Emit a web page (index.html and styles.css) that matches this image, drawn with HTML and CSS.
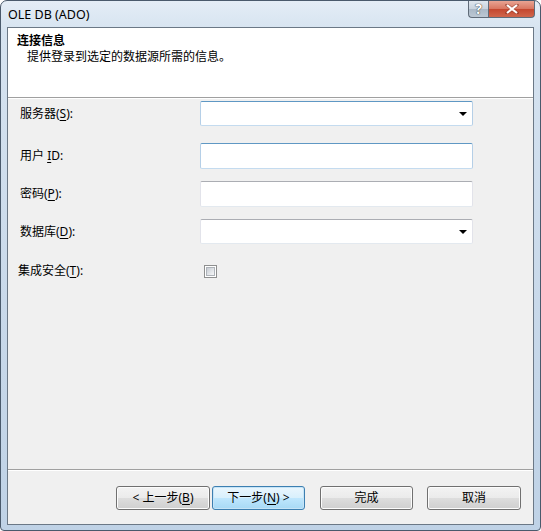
FILE: index.html
```html
<!DOCTYPE html>
<html lang="zh-CN">
<head>
<meta charset="utf-8">
<title>OLE DB (ADO)</title>
<link rel="stylesheet" href="styles.css">
</head>
<body>
<div class="window">
  <div class="titlebar">
    <span class="title">OLE DB (ADO)</span>
    <div class="caption-buttons">
      <div class="cap-btn help"><span>?</span></div>
      <div class="cap-btn close">
        <svg width="14" height="10" viewBox="0 0 14 10"><path d="M2 1 L12 9 M12 1 L2 9" stroke="#7a2a1a" stroke-width="3.4" stroke-linecap="square" opacity="0.5"/><path d="M2 1 L12 9 M12 1 L2 9" stroke="#fff" stroke-width="2.2"/></svg>
      </div>
    </div>
  </div>
  <div class="client">
    <div class="header">
      <div class="header-title">连接信息</div>
      <div class="header-sub">提供登录到选定的数据源所需的信息。</div>
    </div>
    <div class="body">
      <div class="row row-server">
        <label class="lbl">服务器(<u>S</u>):</label>
        <div class="combo focus-blue"><span class="arrow"></span></div>
      </div>
      <div class="row row-user">
        <label class="lbl">用户 <u>I</u>D:</label>
        <div class="textbox focus-blue"></div>
      </div>
      <div class="row row-pwd">
        <label class="lbl">密码(<u>P</u>):</label>
        <div class="textbox"></div>
      </div>
      <div class="row row-db">
        <label class="lbl">数据库(<u>D</u>):</label>
        <div class="combo"><span class="arrow"></span></div>
      </div>
      <div class="row row-check">
        <label class="lbl lbl-check">集成安全(<u>T</u>):</label>
        <div class="checkbox"><div class="check-inner"></div></div>
      </div>
    </div>
    <div class="footer">
      <div class="btn">&lt; 上一步(<u>B</u>)</div>
      <div class="btn btn-default">下一步(<u>N</u>) &gt;</div>
      <div class="btn btn-finish">完成</div>
      <div class="btn btn-cancel">取消</div>
    </div>
  </div>
</div>
</body>
</html>
```

FILE: styles.css
```css
* { box-sizing: border-box; }
html, body {
  margin: 0;
  padding: 0;
  background: #fff;
}
body {
  font-family: "Noto Sans", "Noto Sans CJK SC", sans-serif;
  font-size: 12px;
  color: #000;
}
.window {
  width: 541px;
  height: 531px;
  border: 1px solid #4a5a6c;
  border-radius: 7px 7px 4px 4px;
  background: linear-gradient(180deg, #e4edf6 0px, #d6e3f0 30px, #c9d9ea 300px, #bfd2e6 531px);
  display: flex;
  flex-direction: column;
  padding: 0 6px 5px 6px;
}
.titlebar {
  height: 26px;
  display: flex;
  align-items: flex-start;
}
.title {
  padding: 5px 0 0 1px;
  font-size: 12.5px;
  color: #000;
}
.caption-buttons {
  margin-left: auto;
  margin-right: -1px;
  display: flex;
}
.cap-btn {
  height: 17px;
  border: 1px solid #5f6b78;
  border-top: none;
  display: flex;
  align-items: center;
  justify-content: center;
}
.help {
  width: 20px;
  border-radius: 0 0 0 4px;
  border-right: none;
  background: linear-gradient(180deg, #dfe6ee 0%, #c8d2dd 50%, #aab8c6 51%, #bcc8d4 100%);
  color: #fff;
  font-weight: bold;
  font-size: 14px;
}
.help span {
  text-shadow: 0 0 1px #333, 0 0 1px #333;
  line-height: 14px;
}
.close {
  width: 47px;
  border-radius: 0 0 4px 0;
  background: linear-gradient(180deg, #e8a493 0%, #d8755f 50%, #c4472f 51%, #d0664c 100%);
}
.client {
  flex: 1;
  border: 1px solid #6b7886;
  background: #f0f0f0;
  display: flex;
  flex-direction: column;
}
.header {
  height: 70px;
  background: #fff;
  border-bottom: 1px solid #a0a0a0;
  box-shadow: 0 1px 0 #fff;
  padding: 5px 0 0 9px;
}
.header-title {
  font-weight: bold;
  line-height: 16px;
}
.header-sub {
  padding-left: 10px;
  line-height: 16px;
}
.body {
  flex: 1;
  padding: 3px 0 0 12px;
  display: flex;
  flex-direction: column;
  border-bottom: 1px solid #a0a0a0;
  box-shadow: 0 1px 0 #fff;
}
.row {
  display: flex;
  align-items: center;
}
.lbl {
  width: 180px;
  line-height: 16px;
}
.lbl u { text-decoration-thickness: 1px; text-underline-offset: 2px; }
.lbl-check { margin-left: -2px; width: 182px; }
.row-user { margin-top: 17px; }
.row-pwd { margin-top: 12px; }
.row-db { margin-top: 12px; }
.row-check { margin-top: 19px; }
.combo, .textbox {
  width: 273px;
  background: #fff;
  border: 1px solid #e2e3ea;
  border-top-color: #abadb3;
  border-bottom-color: #e3e9ef;
  border-radius: 2px;
  position: relative;
}
.combo { height: 25px; }
.textbox { height: 26px; }
.focus-blue {
  border-color: #b5cfe7;
  border-top-color: #5f98c4;
  border-bottom-color: #c4dbef;
}
.arrow {
  position: absolute;
  right: 5px;
  top: 10px;
  width: 0;
  height: 0;
  border-left: 4px solid transparent;
  border-right: 4px solid transparent;
  border-top: 4px solid #000;
}
.checkbox {
  margin-left: 4px;
  width: 13px;
  height: 13px;
  border: 1px solid #8e8f8f;
  background: #fff;
  padding: 1px;
}
.check-inner {
  width: 9px;
  height: 9px;
  background: linear-gradient(135deg, #c6cbd2 0%, #dfe2e6 50%, #f6f7f8 100%);
  border: 1px solid #aeb3b9;
}
.footer {
  height: 54px;
  flex: none;
  display: flex;
  align-items: flex-start;
  padding: 16px 0 0 108px;
}
.btn {
  width: 94px;
  height: 24px;
  border: 1px solid #707070;
  border-radius: 3px;
  background: linear-gradient(180deg, #f3f3f3 0%, #ebebeb 48%, #dddddd 52%, #cfcfcf 100%);
  box-shadow: inset 0 0 0 1px #fcfcfc;
  display: flex;
  align-items: center;
  justify-content: center;
  line-height: 16px;
}
.btn u { text-underline-offset: 2px; }
.btn-default {
  margin-left: 2px;
  width: 93px;
  border-color: #3c7fb1;
  background: linear-gradient(180deg, #eaf6fd 0%, #d9f0fc 48%, #bee6fd 52%, #a7d9f5 100%);
  box-shadow: inset 0 0 0 1px #c6e4f7;
}
.btn-finish { margin-left: 15px; width: 93px; }
.btn-cancel { margin-left: 14px; width: 94px; }
```
